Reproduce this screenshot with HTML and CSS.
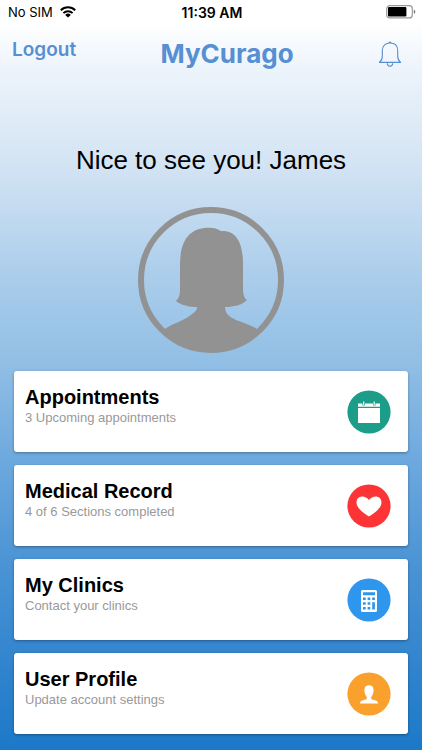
FILE: index.html
```html
<!DOCTYPE html>
<html lang="en">
<head>
<meta charset="utf-8">
<meta name="viewport" content="width=device-width, initial-scale=1">
<title>MyCurago</title>
<link rel="stylesheet" href="styles.css">
</head>
<body>
<div class="status">
  <div class="carrier">
    <span>No SIM</span>
    <svg class="wifi" viewBox="0 0 16 12" aria-hidden="true"><g fill="none" stroke="#000" stroke-width="2"><path d="M.8 4.3a10.3 10.3 0 0 1 14.4 0"/><path d="M3.4 7.1a6.5 6.5 0 0 1 9.2 0"/></g><path d="M8 11.6 5.2 8.9a4 4 0 0 1 5.6 0z"/></svg>
  </div>
  <time class="clock">11:39 AM</time>
  <svg class="battery" viewBox="0 0 30 14" aria-hidden="true"><rect x=".7" y=".7" width="25.6" height="12.2" rx="3" fill="#fff" stroke="#999" stroke-width="1.2"/><rect x="2" y="2" width="18.4" height="9.6" rx="1"/><path d="M27.8 4.8c2 .6 2 3.4 0 4z" fill="#777"/></svg>
</div>
<header class="navbar">
  <a class="logout" href="#logout">Logout</a>
  <h1 class="brand">MyCurago</h1>
  <button class="bell" type="button" aria-label="Notifications">
    <svg viewBox="0 0 24 28" aria-hidden="true"><g fill="none" stroke="#568fd3" stroke-width="1.1" stroke-linejoin="round"><path d="M1.4 22.4c2-1.7 2.9-3.3 2.9-6.2v-5.4C4.3 5.9 7.2 3 12 3s7.7 2.9 7.7 7.8v5.4c0 2.9.9 4.5 2.900 6.200z"/><path d="M9.300 23.300a2.700 2.900 0 0 0 5.400 0"/></g><path d="M10.500 3a1.500 1.600 0 0 1 3 0z" fill="#568fd3"/></svg>
  </button>
</header>
<main class="home">
  <h2 class="greeting">Nice to see you! James</h2>
  <svg class="avatar" viewBox="0 0 146 146" role="img" aria-label="Profile picture">
    <circle cx="73" cy="73" r="70" fill="none" stroke="#929292" stroke-width="6"/>
    <path fill="#929292" d="M27 122C35 116 46 114 54 107C58 104 59 103 59 100C51 100 43 98 38 94C41 91 42 88 42 82V58C42 34 51 23 66 21C73 20 79 21 83 24C99 23 105 37 105 57V80C105 88 106 91 109 93C104 98 96 100 87 100C87 107 92 110 98 113C106 116 113 118 119 122L121 124A69 69 0 0 1 25 124Z"/>
  </svg>
  <nav class="cards">
    <a class="card" href="#appointments">
      <span class="label"><strong>Appointments</strong><small>3 Upcoming appointments</small></span>
      <svg class="icon" viewBox="0 0 44 44" aria-hidden="true"><circle cx="22" cy="22" r="21.600" fill="#1c9d89"/><path fill="#fff" d="M11 17.900h22V33H11zM11 13.500h22v3.300H11z"/><path stroke="#1c9d89" stroke-width="2.600" d="M16.700 12v3.600m10.500-3.600v3.600"/><path stroke="#fff" stroke-width="1.200" d="M16.700 11.500v3.800m10.500-3.800v3.800"/></svg>
    </a>
    <a class="card" href="#records">
      <span class="label"><strong>Medical Record</strong><small>4 of 6 Sections completed</small></span>
      <svg class="icon" viewBox="0 0 44 44" aria-hidden="true"><circle cx="22" cy="22" r="21.600" fill="#fc3436"/><path fill="#fff" d="M22 32.500C18 30 9.500 24.500 9.500 18.500C9.500 11.500 18 10.500 22 16C26 10.500 34.500 11.500 34.500 18.500C34.500 24.500 26 30 22 32.500Z"/></svg>
    </a>
    <a class="card" href="#clinics">
      <span class="label"><strong>My Clinics</strong><small>Contact your clinics</small></span>
      <svg class="icon" viewBox="0 0 44 44" aria-hidden="true"><circle cx="22" cy="22" r="21.600" fill="#2e96ec"/><rect x="14" y="12" width="16" height="22" rx="1.500" fill="#fff"/><path fill="#2e96ec" d="M16 14.200h12v3H16zM16 19.500h2.700v2.500H16zM20.600 19.500h2.700v2.500h-2.700zM25.200 19.500h2.700v2.500h-2.700zM16 24.200h2.700v2.500H16zM20.600 24.200h2.700v2.500h-2.700zM16 29h2.700v2.500H16zM20.600 29h2.700v2.500h-2.700zM25.200 24.200h2.700v7.300h-2.700z"/></svg>
    </a>
    <a class="card" href="#profile">
      <span class="label"><strong>User Profile</strong><small>Update account settings</small></span>
      <svg class="icon" viewBox="0 0 44 44" aria-hidden="true"><circle cx="22" cy="22" r="21.600" fill="#faa02c"/><path fill="#fff" d="M13 31.500c.3-2.300 1.300-2.800 5-3.700 2.300-.6 2.300-1.800 1.400-3.300-1-1.300-1.700-3-1.900-5.200-.5-4 1.400-6 4.500-6s5 2 4.500 6c-.2 2.200-.9 3.900-1.900 5.200-.9 1.500-.9 2.700 1.400 3.300 3.700.9 4.700 1.400 5 3.700z"/></svg>
    </a>
  </nav>
</main>
</body>
</html>
```
FILE: styles.css
```css
* {
  box-sizing: border-box;
}

body {
  margin: 0;
  min-height: 100vh;
  font-family: "Liberation Sans", Arial, sans-serif;
  color: #000;
  background: linear-gradient(#fff 0%, #fff 3%, #edf4fb 9%, #d5e5f4 21%, #c6dcf1 27%, #aacdeb 37%, #92bfe5 48%, #6ba8de 62%, #4b94d5 75%, #3486cf 87%, #1c79c8 100%);
}

.status,
.navbar {
  font-family: Inter, sans-serif;
}

.status {
  display: grid;
  grid-template-columns: 1fr auto 1fr;
  align-items: center;
  height: 24px;
  padding: 0 6px 0 8px;
  font-size: 13px;
}

.carrier {
  display: flex;
  align-items: center;
  gap: 7px;
}

.wifi {
  width: 16px;
  height: 12px;
}

.clock {
  font-size: 14px;
  font-weight: 600;
}

.battery {
  width: 30px;
  height: 14px;
  justify-self: end;
}

.navbar {
  display: flex;
  justify-content: space-between;
  align-items: flex-start;
  height: 60px;
  padding: 12px 20px 0 12px;
  color: #568fd3;
}

.logout {
  font-size: 19px;
  line-height: 28px;
  font-weight: 600;
  color: inherit;
  text-decoration: none;
}

.brand {
  margin: 0;
  font-size: 26px;
  line-height: 36px;
  font-weight: 700;
}

.bell {
  padding: 4px 0;
  border: 0;
  background: none;
}

.bell svg {
  display: block;
  width: 24px;
  height: 28px;
}

.home {
  display: flex;
  flex-direction: column;
  align-items: center;
  padding: 60px 14px 16px;
}

.greeting {
  margin: 0;
  font-size: 26px;
  line-height: 32px;
  font-weight: 400;
}

.avatar {
  width: 146px;
  height: 146px;
  margin: 31px 0 18px;
}

.cards {
  display: flex;
  flex-direction: column;
  gap: 13px;
  width: 100%;
}

.card {
  display: flex;
  align-items: center;
  justify-content: space-between;
  min-height: 81px;
  padding: 14px 17px 14px 11px;
  border-radius: 3px;
  background: #fff;
  box-shadow: 0 1px 3px rgba(0, 0, 0, 0.35);
  color: inherit;
  text-decoration: none;
}

.label {
  align-self: start;
}

.label strong,
.label small {
  display: block;
}

.label strong {
  font-size: 20px;
  line-height: 24px;
}

.label small {
  font-size: 13px;
  line-height: 18px;
  color: #999;
}

.icon {
  width: 44px;
  height: 44px;
}
```
